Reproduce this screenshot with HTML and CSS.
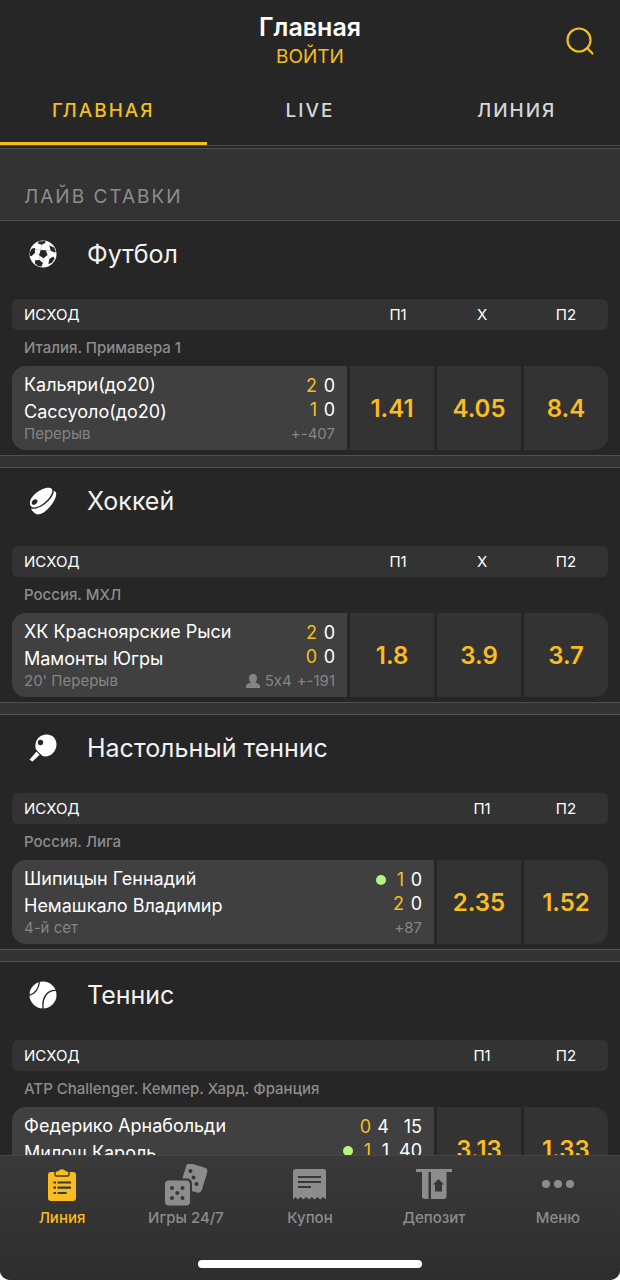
FILE: index.html
```html
<!DOCTYPE html>
<html lang="ru">
    <head>
        <meta charset="utf-8">
        <meta name="viewport" content="width=device-width, initial-scale=1">
        <title>Главная</title>
        <link rel="stylesheet" href="styles.css">
    </head>
    <body>
        <div class="app">
            <header class="header">
                <div class="header-top">
                    <div class="header-title">
                        <h1>Главная</h1>
                        <a href="#login" class="login">ВОЙТИ</a>
                    </div>
                    <button class="search" aria-label="Поиск">
                        <svg width="30" height="30" viewBox="0 0 30 30" fill="none" stroke="currentColor" stroke-width="2.2" stroke-linecap="round">
                            <circle cx="14" cy="14" r="11.5"/>
                            <path d="M22.3 22.3L27.5 27.5"/>
                        </svg>
                    </button>
                </div>
                <nav class="tabs">
                    <a href="#main" class="tab active">ГЛАВНАЯ</a>
                    <a href="#live" class="tab">LIVE</a>
                    <a href="#line" class="tab">ЛИНИЯ</a>
                </nav>
            </header>

            <main class="content">
                <h2 class="live-title">ЛАЙВ СТАВКИ</h2>

                <section class="sport">
                    <h3 class="sport-title">
                        <svg width="28" height="28" viewBox="0 0 28 28">
                            <circle cx="14" cy="14" r="13.5" fill="#fff"/>
                            <g fill="#262626">
                                <path d="M11.6 10.1L16.8 10.3L18.6 15L14.5 18.2L10 15.2Z"/>
                                <path d="M9.3 1.5L16.2 1.1L16.5 2.8L12.9 4.8L9 3.6Z"/>
                                <path d="M20.2 5.5L25.2 7.5L26.8 11.9L25.6 12.5L21.8 10.7Z"/>
                                <path d="M0.8 12L2.9 8.5L6.3 7.9L5.9 12.9L2.4 16.2L1 15.8Z"/>
                                <path d="M6.1 20.3L10.4 20L14 23L12.5 26.6L9.3 26.3L6 23.6Z"/>
                                <path d="M20.3 19.1L24.3 16.4L25.6 18.4L23.2 22.6L19.4 24.2Z"/>
                            </g>
                            <path d="M12.9 4.8L11.6 10.1M21.8 10.7L16.8 10.3M6.3 9.5L11.6 10.1M5.9 12.9L10 15.2L10.4 20M14.5 18.2L14 23M18.6 15L20.3 19.1" fill="none" stroke="#bbb" stroke-width="0.6"/>
                        </svg>
                        Футбол
                    </h3>
                    <table class="market three">
                        <thead>
                            <tr><th>ИСХОД</th><th>П1</th><th>X</th><th>П2</th></tr>
                        </thead>
                        <tbody>
                            <tr class="league"><td>Италия. Примавера 1</td></tr>
                            <tr class="match">
                                <td class="info">
                                    <div class="teams">
                                        <div class="team">Кальяри(до20)</div>
                                        <div class="team">Сассуоло(до20)</div>
                                        <div class="note">Перерыв</div>
                                    </div>
                                    <div class="scores">
                                        <div class="score"><b>2</b><span>0</span></div>
                                        <div class="score"><b>1</b><span>0</span></div>
                                        <div class="more">+-407</div>
                                    </div>
                                </td>
                                <td><button class="odd">1.41</button></td>
                                <td><button class="odd">4.05</button></td>
                                <td><button class="odd">8.4</button></td>
                            </tr>
                        </tbody>
                    </table>
                </section>

                <section class="sport">
                    <h3 class="sport-title">
                        <svg width="28" height="28" viewBox="0 0 28 28">
                            <path d="M1 15.500C1.500 8.500 13 .5 20 .8C22 .8 23.400 2 23.400 4C23 9.500 13 20.500 4.500 20.500C1.800 20.300 .6 18 1 15.500Z" fill="#fff"/>
                            <path d="M24.800 3.500L27 5.500C29 12 17 27.500 8.500 27.500C6.500 27.300 3.300 24.800 2 21.600C11 23.500 25 11.500 24.800 3.500Z" fill="#fff"/>
                            <ellipse cx="5.600" cy="15" rx="3.200" ry="2.200" transform="rotate(-42 5.600 15)" fill="#262626"/>
                        </svg>
                        Хоккей
                    </h3>
                    <table class="market three">
                        <thead>
                            <tr><th>ИСХОД</th><th>П1</th><th>X</th><th>П2</th></tr>
                        </thead>
                        <tbody>
                            <tr class="league"><td>Россия. МХЛ</td></tr>
                            <tr class="match">
                                <td class="info">
                                    <div class="teams">
                                        <div class="team">ХК Красноярские Рыси</div>
                                        <div class="team">Мамонты Югры</div>
                                        <div class="note">20' Перерыв</div>
                                    </div>
                                    <div class="scores">
                                        <div class="score"><b>2</b><span>0</span></div>
                                        <div class="score"><b>0</b><span>0</span></div>
                                        <div class="more">
                                            <svg width="14" height="14" viewBox="0 0 14 14" fill="currentColor">
                                                <path d="M7 0C9.500 0 11 1.800 11 4.200C11 6 10.200 7.600 9 8.500C12 9.300 14 10.300 14 12.500V14H0V12.500C0 10.300 2 9.300 5 8.500C3.800 7.600 3 6 3 4.200C3 1.800 4.500 0 7 0Z"/>
                                            </svg>
                                            <span>5x4</span>
                                            <span>+-191</span>
                                        </div>
                                    </div>
                                </td>
                                <td><button class="odd">1.8</button></td>
                                <td><button class="odd">3.9</button></td>
                                <td><button class="odd">3.7</button></td>
                            </tr>
                        </tbody>
                    </table>
                </section>

                <section class="sport">
                    <h3 class="sport-title">
                        <svg width="28" height="28" viewBox="0 0 28 28">
                            <path d="M6.500 10C7.500 4 12 .5 17.500 .5C23.500 .5 27.500 4.500 27.500 10.500C27.500 17 22 22.500 16.500 22.500C14 22.500 12.500 21.500 10.500 19.500L8.500 17.500C6.500 15.500 6 12.500 6.500 10Z" fill="#fff"/>
                            <path d="M7.500 17.500L10.800 20.800L3.500 27.500L.5 25.800Z" fill="#fff"/>
                            <path d="M6.500 15.800L12.500 21.800" stroke="#262626" stroke-width="1"/>
                            <circle cx="11.500" cy="8.500" r="2.700" fill="#262626"/>
                        </svg>
                        Настольный теннис
                    </h3>
                    <table class="market">
                        <thead>
                            <tr><th>ИСХОД</th><th>П1</th><th>П2</th></tr>
                        </thead>
                        <tbody>
                            <tr class="league"><td>Россия. Лига</td></tr>
                            <tr class="match">
                                <td class="info">
                                    <div class="teams">
                                        <div class="team">Шипицын Геннадий</div>
                                        <div class="team">Немашкало Владимир</div>
                                        <div class="note">4-й сет</div>
                                    </div>
                                    <div class="scores">
                                        <div class="score"><i class="serve"></i><b>1</b><span>0</span></div>
                                        <div class="score"><b>2</b><span>0</span></div>
                                        <div class="more">+87</div>
                                    </div>
                                </td>
                                <td><button class="odd">2.35</button></td>
                                <td><button class="odd">1.52</button></td>
                            </tr>
                        </tbody>
                    </table>
                </section>

                <section class="sport">
                    <h3 class="sport-title">
                        <svg width="28" height="28" viewBox="0 0 28 28">
                            <circle cx="14" cy="14" r="13.500" fill="#fff"/>
                            <path d="M10.500 0C10 7 6.500 12.500 0 14.500M28 9.500C18 8.500 12.500 17 14.300 28" fill="none" stroke="#262626" stroke-width="1.300"/>
                        </svg>
                        Теннис
                    </h3>
                    <table class="market">
                        <thead>
                            <tr><th>ИСХОД</th><th>П1</th><th>П2</th></tr>
                        </thead>
                        <tbody>
                            <tr class="league"><td>ATP Challenger. Кемпер. Хард. Франция</td></tr>
                            <tr class="match">
                                <td class="info">
                                    <div class="teams">
                                        <div class="team">Федерико Арнабольди</div>
                                        <div class="team">Милош Кароль</div>
                                    </div>
                                    <div class="scores">
                                        <div class="score"><b>0</b><span>4</span><span class="game">15</span></div>
                                        <div class="score"><i class="serve"></i><b>1</b><span>1</span><span class="game">40</span></div>
                                    </div>
                                </td>
                                <td><button class="odd">3.13</button></td>
                                <td><button class="odd">1.33</button></td>
                            </tr>
                        </tbody>
                    </table>
                </section>
            </main>

            <footer class="bottom">
                <nav class="menu">
                    <a href="#line" class="menu-item active">
                        <svg width="44" height="44" viewBox="0 0 44 44">
                            <path d="M11 8H33Q36 8 36 11V34Q36 37 33 37H11Q8 37 8 34V11Q8 8 11 8Z" fill="currentColor"/>
                            <path d="M15 10.500V8.500Q15 6.500 18 6.500Q19 4.500 22 4.500Q25 4.500 26 6.500Q29 6.500 29 8.500V10.500Q29 12 27.500 12H16.500Q15 12 15 10.500Z" fill="currentColor" stroke="#383838" stroke-width="1.400"/>
                            <path d="M13.500 18.500H16M17.500 18.500H31M13.500 23.700H16M17.500 23.700H31M13.500 29H16M17.500 29H26.500" stroke="#383838" stroke-width="2.200"/>
                        </svg>
                        <span>Линия</span>
                    </a>
                    <a href="#games" class="menu-item">
                        <svg width="44" height="44" viewBox="0 0 44 44" fill="currentColor">
                            <rect x="19" y="1" width="22" height="26" rx="4" transform="rotate(17 30 14)"/>
                            <g fill="#373737">
                                <circle cx="26.500" cy="7" r="2"/><circle cx="29.500" cy="13.500" r="2"/><circle cx="32.500" cy="20" r="2"/>
                                <rect x="-1" y="14.500" width="29" height="29" rx="5"/>
                            </g>
                            <rect x="1" y="16.500" width="25" height="25" rx="4"/>
                            <g fill="#373737">
                                <circle cx="8" cy="24" r="2"/><circle cx="18.500" cy="24" r="2"/><circle cx="13.300" cy="29" r="2"/><circle cx="8" cy="34" r="2"/><circle cx="18.500" cy="34" r="2"/>
                            </g>
                        </svg>
                        <span>Игры 24/7</span>
                    </a>
                    <a href="#coupon" class="menu-item">
                        <svg width="44" height="44" viewBox="0 0 44 44">
                            <path d="M8 5H36Q38 5 38 8V35.500L35 33L32.200 35.500L29.400 33L26.600 35.500L23.800 33L21 35.500L18.200 33L15.400 35.500L12.600 33L9.800 35.500L7.500 33L5 35.500V8Q5 5 8 5Z" fill="currentColor"/>
                            <path d="M10 13H33M10 18H33M10 23H23" stroke="#373737" stroke-width="2"/>
                        </svg>
                        <span>Купон</span>
                    </a>
                    <a href="#deposit" class="menu-item">
                        <svg width="44" height="44" viewBox="0 0 44 44" fill="currentColor">
                            <path d="M4 5H40V8H34.500V32Q34.500 35 31.500 35H19V8H16.500V35H13Q10 35 10 32V8H4Z"/>
                            <path d="M26.500 15L32 20.500H30V27.500H23V20.500H21Z" fill="#373737"/>
                        </svg>
                        <span>Депозит</span>
                    </a>
                    <a href="#menu" class="menu-item">
                        <svg width="44" height="44" viewBox="0 0 44 44" fill="currentColor">
                            <circle cx="10" cy="20" r="4"/><circle cx="22" cy="20" r="4"/><circle cx="34" cy="20" r="4"/>
                        </svg>
                        <span>Меню</span>
                    </a>
                </nav>
                <div class="home-bar"></div>
            </footer>
        </div>
    </body>
</html>
```
FILE: styles.css
```css
*, *::before {
    box-sizing: border-box;
}

body {
    margin: 0;
    background: #fff;
    color: #fff;
    font-family: Inter, "Noto Sans", sans-serif;
    font-size: 18px;
    font-variant-ligatures: no-contextual;
}

a {
    color: inherit;
    text-decoration: none;
}

button {
    border: 0;
    padding: 0;
    font: inherit;
    cursor: pointer;
}

h1, h2, h3 {
    margin: 0;
}

.app {
    display: flex;
    flex-direction: column;
    height: 100vh;
    overflow: hidden;
    background: #262626;
    border-radius: 0 0 10px 10px;
}

/* header */
.header {
    border-bottom: 1px solid #4a4a4a;
}

.header-top {
    display: grid;
    grid-template-columns: 1fr auto 1fr;
    align-items: center;
    padding: 11px 25px 0;
}

.header-title {
    grid-column: 2;
    text-align: center;
}

.header-title h1 {
    font-size: 25px;
    line-height: 32px;
    font-weight: 600;
}

.login {
    display: block;
    color: #f3bf1f;
    font-size: 19px;
    line-height: 28px;
}

.search {
    justify-self: end;
    display: flex;
    background: none;
    color: #f3bf1f;
}

.tabs {
    display: grid;
    grid-template-columns: repeat(3, 1fr);
}

.tab {
    padding: 26px 0 17px;
    border-bottom: 3px solid transparent;
    color: #d6d6d6;
    font-size: 19px;
    line-height: 28px;
    font-weight: 500;
    letter-spacing: 2px;
    text-align: center;
}

.tab.active {
    color: #f3bf1f;
    border-color: #f3bf1f;
}

/* sports list */
.content {
    flex: 1;
    min-height: 0;
    margin-top: 2px;
    overflow-y: auto;
    scrollbar-width: none;
}

.live-title {
    padding: 34px 24px 10px;
    border-top: 1px solid #505050;
    border-bottom: 1px solid #505050;
    background: #333;
    color: #8e8e8e;
    font-size: 19px;
    line-height: 27px;
    font-weight: 400;
    letter-spacing: 2px;
}

.sport {
    padding: 0 12px 5px;
}

.sport + .sport::before {
    content: "";
    display: block;
    height: 13px;
    margin: 0 -12px;
    border: solid #505050;
    border-width: 1px 0;
    background: #333;
}

.sport-title {
    display: flex;
    align-items: center;
    gap: 30px;
    height: 78px;
    padding: 0 17px 12px;
    font-size: 25px;
    font-weight: 400;
    color: #f2f2f2;
}

.market, .market thead, .market tbody {
    display: block;
}

.market tr {
    display: grid;
    grid-template-columns: 1fr 84px 84px;
}

.market.three tr {
    grid-template-columns: 1fr 84px 84px 84px;
}

.market td, .market th {
    display: block;
    padding: 0;
}

.market thead tr {
    border-radius: 6px;
    background: #333;
}

.market th {
    font-size: 15px;
    line-height: 31px;
    font-weight: 400;
}

.market th:first-child {
    padding-left: 12px;
    text-align: left;
}

.market .league {
    display: block;
    padding: 0 12px;
    color: #8c8c8c;
    font-size: 15px;
    line-height: 36px;
    font-weight: 500;
}

.market .match {
    gap: 3px;
    overflow: hidden;
    border-radius: 14px;
}

.market .info {
    display: flex;
    justify-content: space-between;
    height: 84px;
    padding: 5px 12px 0;
    background: #404040;
}

.team {
    line-height: 27px;
}

.note, .more {
    color: #858585;
    font-size: 15px;
    line-height: 17px;
}

.scores {
    padding-top: 3px;
}

.score {
    display: flex;
    align-items: center;
    justify-content: flex-end;
    gap: 6px;
    line-height: 24px;
}

.score b, .score span {
    min-width: 12px;
    font-weight: 400;
    text-align: right;
}

.score b {
    color: #f3bf1f;
}

.score .game {
    min-width: 27px;
}

.serve {
    width: 10px;
    height: 10px;
    border-radius: 50%;
    background: #b4f57c;
}

.more {
    display: flex;
    align-items: center;
    justify-content: flex-end;
    gap: 5px;
    padding-top: 3px;
}

.odd {
    display: block;
    width: 100%;
    height: 84px;
    background: #333;
    color: #fbbc1d;
    font-size: 24px;
    font-weight: 600;
}

/* bottom menu */
.bottom {
    border-top: 1px solid #464646;
    background: linear-gradient(#393939, #2e2e2e);
}

.menu {
    display: grid;
    grid-template-columns: repeat(5, 1fr);
    padding: 8px 0 32px;
}

.menu-item {
    display: flex;
    flex-direction: column;
    align-items: center;
    color: #8c8c8c;
    font-size: 15px;
    line-height: 20px;
    font-weight: 500;
}

.menu-item.active {
    color: #fbbc1d;
}

.home-bar {
    width: 36%;
    height: 8px;
    margin: 0 auto 12px;
    border-radius: 4px;
    background: #fff;
}
```
